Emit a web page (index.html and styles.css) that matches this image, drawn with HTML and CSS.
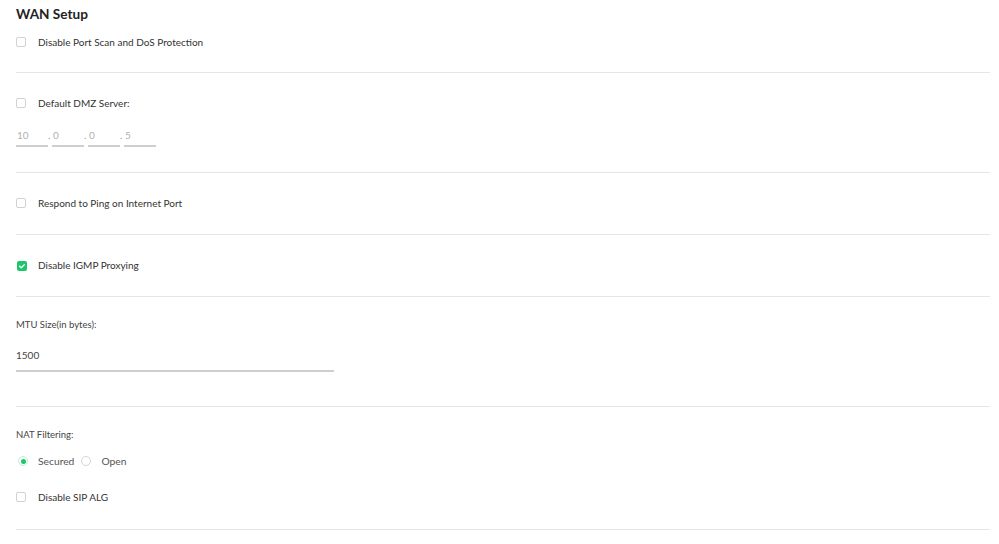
FILE: index.html
```html
<!DOCTYPE html>
<html>
<head>
<meta charset="utf-8">
<link rel="stylesheet" href="styles.css">
</head>
<body>
<div class="page">
  <section class="section first">
    <h1 class="title">WAN Setup</h1>
    <label class="check-row"><span class="box"></span><span class="label">Disable Port Scan and DoS Protection</span></label>
  </section>
  <section class="section">
    <label class="check-row"><span class="box"></span><span class="label">Default DMZ Server:</span></label>
    <div class="ip-row">
      <span class="ip-field">10</span><span class="dot">.</span>
      <span class="ip-field">0</span><span class="dot">.</span>
      <span class="ip-field">0</span><span class="dot">.</span>
      <span class="ip-field">5</span>
    </div>
  </section>
  <section class="section">
    <label class="check-row"><span class="box"></span><span class="label">Respond to Ping on Internet Port</span></label>
  </section>
  <section class="section">
    <label class="check-row"><span class="box checked"><svg viewBox="0 0 10 10" width="10" height="10"><path d="M2.6 5.2 L4.3 6.8 L7.4 3.6" fill="none" stroke="#fff" stroke-width="1.3" stroke-linecap="round" stroke-linejoin="round"/></svg></span><span class="label">Disable IGMP Proxying</span></label>
  </section>
  <section class="section mtu">
    <div class="field-label">MTU Size(in bytes):</div>
    <div class="text-input">1500</div>
  </section>
  <section class="section nat">
    <div class="field-label">NAT Filtering:</div>
    <div class="radio-row">
      <span class="radio on"></span><span class="radio-label">Secured</span>
      <span class="radio"></span><span class="radio-label">Open</span>
    </div>
    <label class="check-row sip"><span class="box"></span><span class="label">Disable SIP ALG</span></label>
  </section>
</div>
</body>
</html>
```
FILE: styles.css
```css
html, body {
  margin: 0;
  padding: 0;
  background: #fff;
}
body {
  font-family: Lato, "Noto Sans", sans-serif;
  color: #333;
}
.page {
  padding: 0 9px 0 16px;
}
.section {
  padding: 23px 0 24px;
  border-bottom: 1px solid #e3e8e6;
}
.section.first {
  padding-top: 4px;
  padding-bottom: 23px;
}
.title {
  margin: 0;
  font-size: 13.6px;
  line-height: 20px;
  font-weight: 700;
  color: #222;
}
.first .check-row {
  margin-top: 11px;
}
.check-row {
  display: flex;
  align-items: center;
  height: 14px;
}
.box {
  width: 8px;
  height: 8px;
  border: 1px solid #d2d2d2;
  border-radius: 2px;
  box-sizing: content-box;
  margin-right: 12px;
  display: flex;
  align-items: center;
  justify-content: center;
  flex: none;
}
.box.checked {
  width: 10px;
  height: 10px;
  border: none;
  background: #1ec66b;
  margin-left: 1px;
  margin-top: 2px;
  margin-right: 11px;
}
.label {
  font-size: 10px;
  line-height: 14px;
  font-weight: 400;
  color: #333;
}
.ip-row {
  display: flex;
  align-items: flex-end;
  margin-top: 15px;
  margin-bottom: 1px;
}
.ip-field {
  width: 32px;
  height: 22px;
  line-height: 20px;
  border-bottom: 2px solid #cfcfcf;
  font-size: 10px;
  color: #b0b0b0;
  box-sizing: border-box;
  padding-left: 1px;
}
.dot {
  width: 4px;
  font-size: 10px;
  line-height: 20px;
  height: 22px;
  color: #999;
  text-align: left;
}
.mtu {
  padding-top: 21px;
  padding-bottom: 34px;
}
.field-label {
  font-size: 9.5px;
  line-height: 14px;
  color: #444;
}
.text-input {
  width: 318px;
  margin-top: 11px;
  line-height: 24px;
  padding-bottom: 3px;
  border-bottom: 2px solid #cfcfcf;
  font-size: 10px;
  color: #444;
}
.nat {
  padding-top: 21px;
  padding-bottom: 25px;
}
.radio-row {
  display: flex;
  align-items: center;
  height: 14px;
  margin-top: 12px;
}
.radio {
  width: 8px;
  height: 8px;
  border: 1px solid #d6d6d6;
  border-radius: 50%;
  margin-left: 2px;
  margin-right: 10px;
  box-sizing: content-box;
  position: relative;
}
.radio.on {
  border-color: #bfeed2;
  background: #fff;
}
.radio.on::after {
  content: "";
  position: absolute;
  left: 1.5px;
  top: 1.5px;
  width: 5px;
  height: 5px;
  border-radius: 50%;
  background: #1ec66b;
}
.radio-label {
  font-size: 10.3px;
  line-height: 14px;
  color: #555;
  margin-right: 5px;
}
.sip {
  margin-top: 22px;
}
```
